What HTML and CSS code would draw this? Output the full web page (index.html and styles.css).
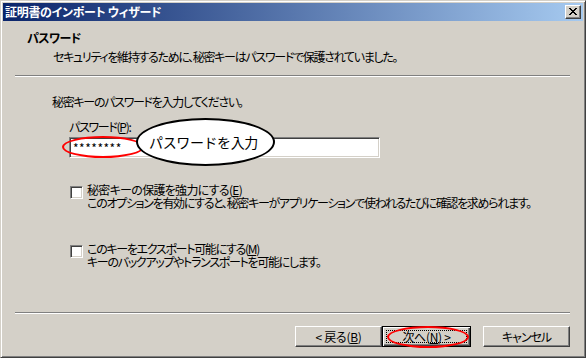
FILE: index.html
```html
<!DOCTYPE html>
<html lang="ja">
<head>
<meta charset="utf-8">
<link rel="stylesheet" href="styles.css">
</head>
<body>
<div class="window">
  <div class="titlebar">
    <span class="title">証明書のインポート ウィザード</span>
    <span class="close">
      <svg width="8" height="7" viewBox="0 0 8 7" shape-rendering="crispEdges">
        <path d="M0 0h2v1H0zM6 0h2v1H6zM1 1h2v1H1zM5 1h2v1H5zM2 2h4v1H2zM3 3h2v1H3zM2 4h4v1H2zM1 5h2v1H1zM5 5h2v1H5zM0 6h2v1H0zM6 6h2v1H6z" fill="#000"/>
      </svg>
    </span>
  </div>
  <div class="content">
    <div class="header">
      <div class="h-title">パスワード</div>
      <div class="h-sub">セキュリティを維持するために、秘密キーはパスワードで保護されていました。</div>
    </div>
    <div class="sep"></div>
    <div class="body">
      <p class="intro">秘密キーのパスワードを入力してください。</p>
      <div class="field">
        <div class="label">パスワード(<u>P</u>):</div>
        <div class="input">********</div>
      </div>
      <div class="option first">
        <span class="cb"></span>
        <div class="opt-text">
          <div class="l1">秘密キーの保護を強力にする(<u>E</u>)</div>
          <div>このオプションを有効にすると、秘密キーがアプリケーションで使われるたびに確認を求められます。</div>
        </div>
      </div>
      <div class="option second">
        <span class="cb"></span>
        <div class="opt-text">
          <div>このキーをエクスポート可能にする(<u>M</u>)</div>
          <div>キーのバックアップやトランスポートを可能にします。</div>
        </div>
      </div>
    </div>
    <div class="sep"></div>
    <div class="buttons">
      <span class="btn">&lt; 戻る(<u>B</u>)</span>
      <span class="btn default"><span class="focus">次へ(<u>N</u>) &gt;</span></span>
      <span class="btn cancel">キャンセル</span>
    </div>
  </div>
  <div class="ring ring-pass"></div>
  <div class="callout">パスワードを入力</div>
  <div class="ring ring-next"></div>
</div>
</body>
</html>
```
FILE: styles.css
```css
* { box-sizing: border-box; }
html, body { margin: 0; padding: 0; background: #D4D0C8; }
body {
  font-family: "Noto Sans CJK JP", "Noto Sans", sans-serif;
  font-size: 12px;
  line-height: 14px;
  color: #000;
  font-feature-settings: "palt";
  letter-spacing: -1.3px;
}
u { text-decoration: underline; text-underline-offset: 1px; }

.window {
  position: relative;
  width: 586px;
  height: 358px;
  background: #D4D0C8;
  border: 1px solid;
  border-color: #D4D0C8 #404040 #404040 #D4D0C8;
  box-shadow: inset 1px 1px #fff, inset -1px -1px #808080;
  padding: 2px;
  display: flex;
  flex-direction: column;
}

.titlebar {
  height: 18px;
  display: flex;
  align-items: center;
  justify-content: space-between;
  padding: 0 2px 0 2px;
  background: linear-gradient(to right, #0A246A, #A6CAF0);
}
.title {
  color: #fff;
  font-weight: bold;
  font-size: 12px;
  letter-spacing: -0.3px;
}
.close {
  width: 16px;
  height: 14px;
  background: #D4D0C8;
  border: 1px solid;
  border-color: #fff #404040 #404040 #fff;
  box-shadow: inset -1px -1px #808080;
  display: flex;
  align-items: center;
  justify-content: center;
  padding: 0 1px 1px 0;
}
.close svg { display: block; }

.content { flex: 1; display: flex; flex-direction: column; }

.header { height: 54px; padding: 10px 0 0 24px; }
.h-title { font-weight: bold; letter-spacing: -0.6px; }
.h-sub { margin-top: 5px; padding-left: 26px; }

.sep {
  margin: 0 13px 0 12px;
  border-top: 1px solid #808080;
  border-bottom: 1px solid #fff;
}

.body { height: 235px; padding: 18px 0 0 49px; }
.intro { margin: 0; }
.field { margin-top: 11px; padding-left: 17px; }
.label { height: 17px; }
.input {
  width: 311px;
  height: 21px;
  background: #fff;
  border: 1px solid;
  border-color: #808080 #fff #fff #808080;
  box-shadow: inset 1px 1px #404040, inset -1px -1px #D4D0C8;
  padding: 3px 0 0 3px;
  line-height: 14px;
  letter-spacing: 0.5px;
}

.option { display: flex; align-items: flex-start; padding-left: 18px; line-height: 13px; }
.option.first { margin-top: 25px; }
.option.second { margin-top: 33px; }
.cb {
  flex: none;
  width: 13px;
  height: 13px;
  margin-top: 3px;
  background: #fff;
  border: 1px solid;
  border-color: #808080 #fff #fff #808080;
  box-shadow: inset 1px 1px #404040, inset -1px -1px #D4D0C8;
}
.opt-text { margin-left: 4px; white-space: nowrap; }
.opt-text .l1 { letter-spacing: -0.7px; }

.buttons {
  display: flex;
  justify-content: flex-end;
  padding: 12px 13px 0 0;
  letter-spacing: -0.3px;
}
.btn {
  width: 87px;
  height: 21px;
  display: flex;
  align-items: center;
  justify-content: center;
  background: #D4D0C8;
  border: 1px solid;
  border-color: #fff #404040 #404040 #fff;
  box-shadow: inset -1px -1px #808080;
  white-space: pre;
}
.btn.default {
  width: 89px;
  border: 1px solid #000;
  box-shadow: inset 1px 1px #fff, inset -1px -1px #404040, inset -2px -2px #808080;
  padding: 3px;
}
.btn.default .focus {
  flex: 1;
  align-self: stretch;
  display: flex;
  align-items: center;
  justify-content: center;
  border: 1px dotted #000;
}
.btn.cancel { margin-left: 12px; letter-spacing: -1px; }

.ring {
  position: absolute;
  border: 2px solid #f00;
  border-radius: 50%;
}
.ring-pass { left: 61px; top: 135px; width: 82px; height: 22px; }
.ring-next { left: 386px; top: 325px; width: 82px; height: 22px; }

.callout {
  position: absolute;
  left: 135px;
  top: 117px;
  width: 139px;
  height: 48px;
  background: #fff;
  border: 2px solid #000;
  border-radius: 50%;
  display: flex;
  align-items: center;
  justify-content: center;
  font-size: 14px;
  font-feature-settings: normal;
  letter-spacing: -0.4px;
  padding-right: 4px;
}
```
